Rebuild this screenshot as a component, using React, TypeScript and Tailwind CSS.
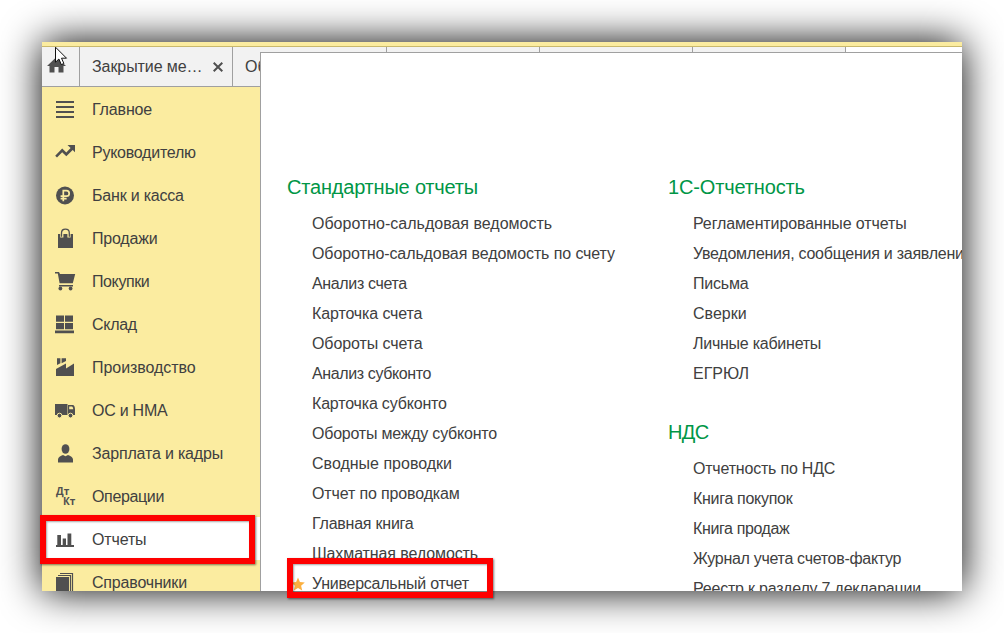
import type { ReactNode } from 'react';

type SidebarItem = { label: string; tracking: string; icon: ReactNode; active?: boolean };
type Report = { label: string; tracking: string; favorite?: boolean };

const sidebarItems: SidebarItem[] = [
  {
    label: 'Главное',
    tracking: 'tracking-[-0.15px]',
    icon: <path d="M2 2h18v2H2zM2 7h18v2H2zM2 12h18v2H2zM2 17h18v2H2z" />,
  },
  {
    label: 'Руководителю',
    tracking: 'tracking-[-0.25px]',
    icon: <path d="M13.5 3H21v7.2l-2.3-2.3-6.4 6.4-4.1-4L3 15.5l-1.8-1.8 7-7.1 4.1 4 4.3-4.6z" />,
  },
  {
    label: 'Банк и касса',
    tracking: 'tracking-[-0.2px]',
    icon: (
      <>
        <circle cx="11" cy="10.500" r="9" />
        <path d="M9.300 16.300V5.700h3.200a2.700 2.700 0 0 1 0 5.400H6.600M6.600 13.600h6" fill="none" stroke="#fbeca0" strokeWidth="1.700" />
      </>
    ),
  },
  {
    label: 'Продажи',
    tracking: 'tracking-[-0.2px]',
    icon: (
      <>
        <path d="M4 6h15v14H4z" />
        <path d="M7.800 9.500V5a3.600 3.600 0 0 1 7.200 0v4.500" fill="none" stroke="#fbeca0" strokeWidth="3.200" />
        <path d="M7.500 8.800V5c0-2.400 1.500-3.800 3.900-3.800s3.900 1.400 3.900 3.800v3.800" fill="none" stroke="#505050" strokeWidth="1.300" />
      </>
    ),
  },
  {
    label: 'Покупки',
    tracking: 'tracking-[-0.4px]',
    icon: (
      <>
        <path d="M1 1h4l1 2h15.200l-2.400 9.200H5.600L3.800 2.500H1zM5 14h14v1.400H5z" />
        <circle cx="6.400" cy="17.500" r="1.900" />
        <circle cx="16.600" cy="17.500" r="1.900" />
      </>
    ),
  },
  {
    label: 'Склад',
    tracking: 'tracking-[-0.3px]',
    icon: <path d="M2 1.500h8v6.300H2zM11 1.500h8v6.300h-8zM2 9h8v6.300H2zM11 9h8v6.300h-8zM1 16.500h19v2.800H1z" />,
  },
  {
    label: 'Производство',
    tracking: 'tracking-[-0.05px]',
    icon: <path d="M2 19v-7l10-5.500v5L20 6.500V19zM3 1.200h3.400v5L3 8zM7.600 1.200H12V4L7.600 6.200z" />,
  },
  {
    label: 'ОС и НМА',
    tracking: 'tracking-[-0.25px]',
    icon: (
      <>
        <path d="M1 4h12.500v11H1zM14 5h4.600c1.600 0 2.400 2 2.400 4.500V15h-7z" />
        <path d="M15.200 6.600h2.600c.9 0 1.200 1 1.400 2.600h-4z" fill="#fbeca0" />
        <circle cx="5.500" cy="15.600" r="2.400" stroke="#fbeca0" />
        <circle cx="16.500" cy="15.600" r="2.400" stroke="#fbeca0" />
      </>
    ),
  },
  {
    label: 'Зарплата и кадры',
    tracking: 'tracking-[-0.18px]',
    icon: (
      <>
        <ellipse cx="11.500" cy="6" rx="3.900" ry="4.800" />
        <path d="M4 19.500v-3c0-2.300 2.500-3.800 5-4.500l2.500 1.200L14 12c2.500.7 5 2.200 5 4.500v3z" />
      </>
    ),
  },
  {
    label: 'Операции',
    tracking: 'tracking-[-0.35px]',
    icon: (
      <g fontFamily="Open Sans, sans-serif" fontSize="10" fontWeight="bold">
        <text x="2" y="8.500">Дт</text>
        <text x="9" y="18.800">Кт</text>
      </g>
    ),
  },
  {
    label: 'Отчеты',
    tracking: 'tracking-[-0.15px]',
    icon: <path d="M3.300 6H7v10H3.300zM8.700 9.500H12V16H8.700zM13.500 4.500h3.800V16h-3.800zM2 16h18v2H2z" />,
    active: true,
  },
  {
    label: 'Справочники',
    tracking: 'tracking-[-0.18px]',
    icon: (
      <>
        <path d="M2 5h13v15H2z" />
        <path d="M4 3.500h12.500V20M6 1.500h12.500V20" fill="none" stroke="#505050" strokeWidth="1.200" />
      </>
    ),
  },
];

const standardReports: Report[] = [
  { label: 'Оборотно-сальдовая ведомость', tracking: 'tracking-normal' },
  { label: 'Оборотно-сальдовая ведомость по счету', tracking: 'tracking-[-0.1px]' },
  { label: 'Анализ счета', tracking: 'tracking-[-0.35px]' },
  { label: 'Карточка счета', tracking: 'tracking-[-0.12px]' },
  { label: 'Обороты счета', tracking: 'tracking-[-0.1px]' },
  { label: 'Анализ субконто', tracking: 'tracking-[-0.38px]' },
  { label: 'Карточка субконто', tracking: 'tracking-[-0.18px]' },
  { label: 'Обороты между субконто', tracking: 'tracking-[-0.22px]' },
  { label: 'Сводные проводки', tracking: 'tracking-normal' },
  { label: 'Отчет по проводкам', tracking: 'tracking-[-0.14px]' },
  { label: 'Главная книга', tracking: 'tracking-[-0.23px]' },
  { label: 'Шахматная ведомость', tracking: 'tracking-[-0.1px]' },
  { label: 'Универсальный отчет', tracking: 'tracking-[-0.25px]', favorite: true },
];

const regulatedReports: Report[] = [
  { label: 'Регламентированные отчеты', tracking: 'tracking-[-0.12px]' },
  { label: 'Уведомления, сообщения и заявления', tracking: 'tracking-[-0.26px]' },
  { label: 'Письма', tracking: 'tracking-[-0.2px]' },
  { label: 'Сверки', tracking: 'tracking-normal' },
  { label: 'Личные кабинеты', tracking: 'tracking-[-0.25px]' },
  { label: 'ЕГРЮЛ', tracking: 'tracking-normal' },
];

const vatReports: Report[] = [
  { label: 'Отчетность по НДС', tracking: 'tracking-[-0.2px]' },
  { label: 'Книга покупок', tracking: 'tracking-[-0.3px]' },
  { label: 'Книга продаж', tracking: 'tracking-[-0.38px]' },
  { label: 'Журнал учета счетов-фактур', tracking: 'tracking-[-0.3px]' },
  { label: 'Реестр к разделу 7 декларации', tracking: 'tracking-[-0.2px]' },
];

export default function App() {
  return (
    <div className="h-[633px] w-[1004px] overflow-hidden bg-white p-[42px] font-['Liberation_Sans',Arial,sans-serif] text-base text-[#404040]">
      <div className="relative h-[549px] w-[920px] shadow-[0_0_38px_#000]">
        <div className="relative flex h-full flex-col overflow-hidden bg-white">
          <div className="h-[5px] shrink-0 border-b border-[#c9b96c] bg-[#fbeca0]" />
          <TabBar />
          <Sidebar />
          <ReportsMenu />
        </div>
        <Highlight className="top-[473px] -left-0.5 h-[49px] w-[215px]" />
        <Highlight className="top-[516px] left-[245px] h-10 w-[206px]" />
        <Cursor />
      </div>
    </div>
  );
}

function TabBar() {
  return (
    <div className="flex h-10 shrink-0 border-b border-[#a0a0a0] bg-[#f2f2f2]">
      <div className="flex w-[38px] shrink-0 border-r border-[#a0a0a0] pt-2.5 pl-[5px]">
        <svg width="19" height="16" viewBox="0 0 19 16" fill="#505050">
          <path d="M9.500 0 19 9h-2.500v6.500h-5V10h-4v5.500h-5V9H0z" />
        </svg>
      </div>
      <div className="flex w-[153px] shrink-0 items-center border-r border-[#a0a0a0] pl-3">
        <span className="w-[121px] tracking-[-0.08px] whitespace-nowrap">Закрытие ме…</span>
        <svg width="10" height="10" viewBox="0 0 10 10" stroke="#505050" strokeWidth="2">
          <path d="m.7.7 8.600 8.600M9.300.7.7 9.300" />
        </svg>
      </div>
      <div className="flex w-[154px] shrink-0 items-center border-r border-[#a0a0a0] pl-3">Обороты</div>
      <div className="w-[153px] shrink-0 border-r border-[#a0a0a0]" />
      <div className="w-[153px] shrink-0 border-r border-[#a0a0a0]" />
      <div className="w-[153px] shrink-0 border-r border-[#a0a0a0]" />
      <div className="grow bg-white" />
    </div>
  );
}

function Sidebar() {
  return (
    <nav className="w-[218px] bg-[#fbeca0]">
      {sidebarItems.map((item) => (
        <div key={item.label} className={`flex h-[43px] items-center pl-3 ${item.active ? 'bg-white' : ''}`}>
          <svg width="22" height="20" viewBox="0 0 22 20" fill="#505050" className="shrink-0">
            {item.icon}
          </svg>
          <span className={`pt-0.5 pl-4 whitespace-nowrap ${item.tracking}`}>{item.label}</span>
        </div>
      ))}
    </nav>
  );
}

function ReportsMenu() {
  return (
    <div className="absolute top-2.5 right-0 bottom-0 left-[218px] flex overflow-hidden border-t border-l border-[#a0a0a0] bg-white pt-[119px] pl-[26px]">
      <div className="w-[381px] shrink-0">
        <ReportGroup title="Стандартные отчеты" titleTracking="tracking-[-0.2px]" items={standardReports} />
      </div>
      <div className="flex shrink-0 flex-col gap-7">
        <ReportGroup title="1С-Отчетность" titleTracking="tracking-[-0.15px]" items={regulatedReports} />
        <ReportGroup title="НДС" titleTracking="tracking-[-0.6px]" items={vatReports} />
      </div>
    </div>
  );
}

function ReportGroup({ title, titleTracking, items }: { title: string; titleTracking: string; items: Report[] }) {
  return (
    <section>
      <h2 className={`h-[30px] text-xl leading-[30px] whitespace-nowrap text-[#009646] ${titleTracking}`}>{title}</h2>
      <ul className="pt-[7px]">
        {items.map((item) => (
          <li key={item.label} className={`relative h-[30px] pl-[25px] leading-[30px] whitespace-nowrap ${item.tracking}`}>
            {item.favorite && (
              <svg className="absolute top-2 left-1" width="14" height="14" viewBox="0 0 14 14" fill="#fbb040">
                <path d="m7 .5 1.900 4.600 4.900.4-3.700 3.200 1.100 4.800L7 10.900l-4.200 2.600 1.100-4.800L.2 5.500l4.900-.4z" />
              </svg>
            )}
            {item.label}
          </li>
        ))}
      </ul>
    </section>
  );
}

function Highlight({ className }: { className: string }) {
  return <div className={`absolute border-6 border-[#fe0000] shadow-[1px_1px_2px_rgba(0,0,0,0.5),inset_1px_1px_2px_rgba(0,0,0,0.35)] ${className}`} />;
}

function Cursor() {
  return (
    <svg className="absolute top-1 left-[13px]" width="13" height="21" viewBox="0 0 13 21">
      <path d="M.5 1.200v15l3.400-3.200 2.400 5.600 2.600-1.100-2.400-5.300h5z" fill="#fff" stroke="#111" />
    </svg>
  );
}
